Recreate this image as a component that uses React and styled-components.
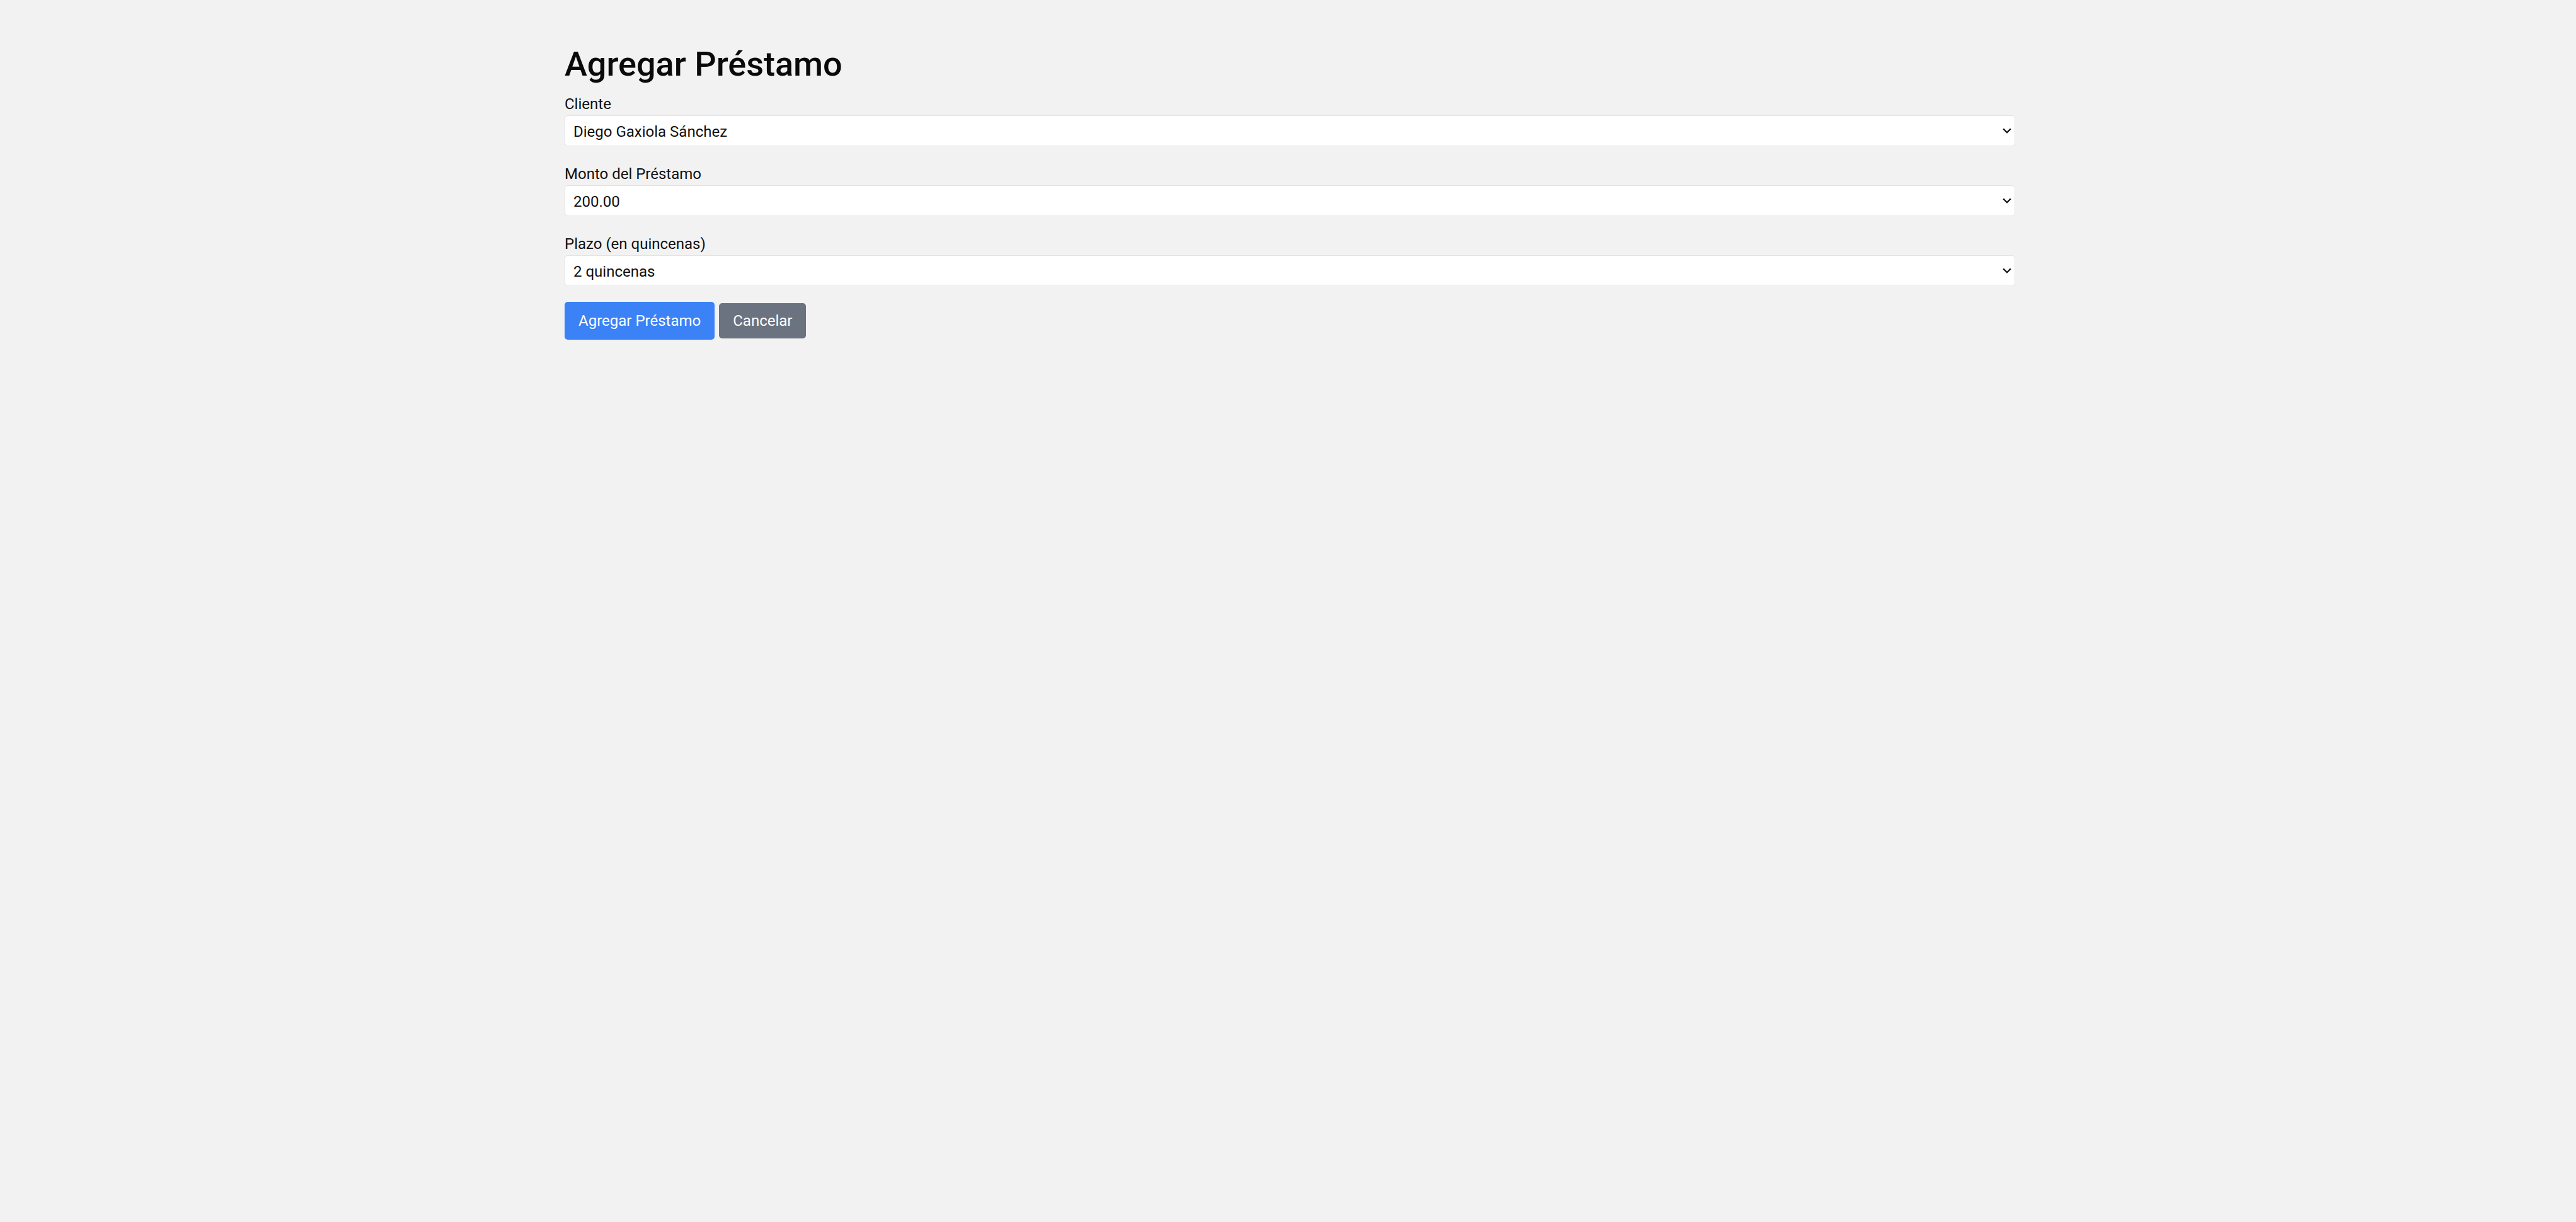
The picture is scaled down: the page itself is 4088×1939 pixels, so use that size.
import React from "react";
import styled, { createGlobalStyle } from "styled-components";

const GlobalStyle = createGlobalStyle`
  html, body {
    margin: 0;
    padding: 0;
    background: #f2f2f2;
  }
  body {
    font-family: Roboto, "Noto Sans", Arial, sans-serif;
    color: #111;
    min-height: 1939px;
  }
`;

const Page = styled.main`
  width: 2302px;
  margin: 0 auto;
  padding: 72px 0 0 6px;
`;

const Title = styled.h1`
  margin: 0 0 16px;
  font-size: 54px;
  line-height: 60px;
  font-weight: 500;
  color: #0a0a0a;
`;

const Field = styled.div`
  margin-bottom: 27px;
`;

const Label = styled.label`
  display: block;
  font-size: 24px;
  line-height: 35px;
  color: #111;
`;

const SelectWrap = styled.div`
  position: relative;
`;

const Select = styled.select`
  display: block;
  width: 100%;
  height: 49px;
  box-sizing: border-box;
  padding: 2px 40px 0 13px;
  border: 1px solid #e3e3e3;
  border-radius: 5px;
  background: #fff;
  font-family: inherit;
  font-size: 24px;
  color: #111;
  appearance: none;
  -webkit-appearance: none;
  outline: none;
`;

const Chevron = styled.svg`
  position: absolute;
  right: 6px;
  top: 50%;
  width: 14px;
  height: 9px;
  margin-top: -5px;
  pointer-events: none;
`;

const Actions = styled.div`
  display: flex;
  align-items: center;
  gap: 7px;
  margin-top: -2px;
`;

const Button = styled.button`
  height: ${(p) => (p.$primary ? "60px" : "56px")};
  padding: 0 22px;
  border: none;
  border-radius: 5px;
  background: ${(p) => (p.$primary ? "#3b82f6" : "#6b7280")};
  color: #fff;
  font-family: inherit;
  font-size: 24px;
  cursor: pointer;
`;

const fields = [
  { id: "cliente", label: "Cliente", value: "Diego Gaxiola Sánchez" },
  { id: "monto", label: "Monto del Préstamo", value: "200.00" },
  { id: "plazo", label: "Plazo (en quincenas)", value: "2 quincenas" },
];

const App = () => {
  return (
    <>
      <GlobalStyle />
      <Page>
        <Title>Agregar Préstamo</Title>
        {fields.map((f) => (
          <Field key={f.id}>
            <Label htmlFor={f.id}>{f.label}</Label>
            <SelectWrap>
              <Select id={f.id} defaultValue={f.value}>
                <option>{f.value}</option>
              </Select>
              <Chevron viewBox="0 0 14 9" fill="none">
                <path
                  d="M1.2 1.4 7 7.2l5.8-5.8"
                  stroke="#111"
                  strokeWidth="2.2"
                />
              </Chevron>
            </SelectWrap>
          </Field>
        ))}
        <Actions>
          <Button $primary>Agregar Préstamo</Button>
          <Button>Cancelar</Button>
        </Actions>
      </Page>
    </>
  );
};

export default App;
